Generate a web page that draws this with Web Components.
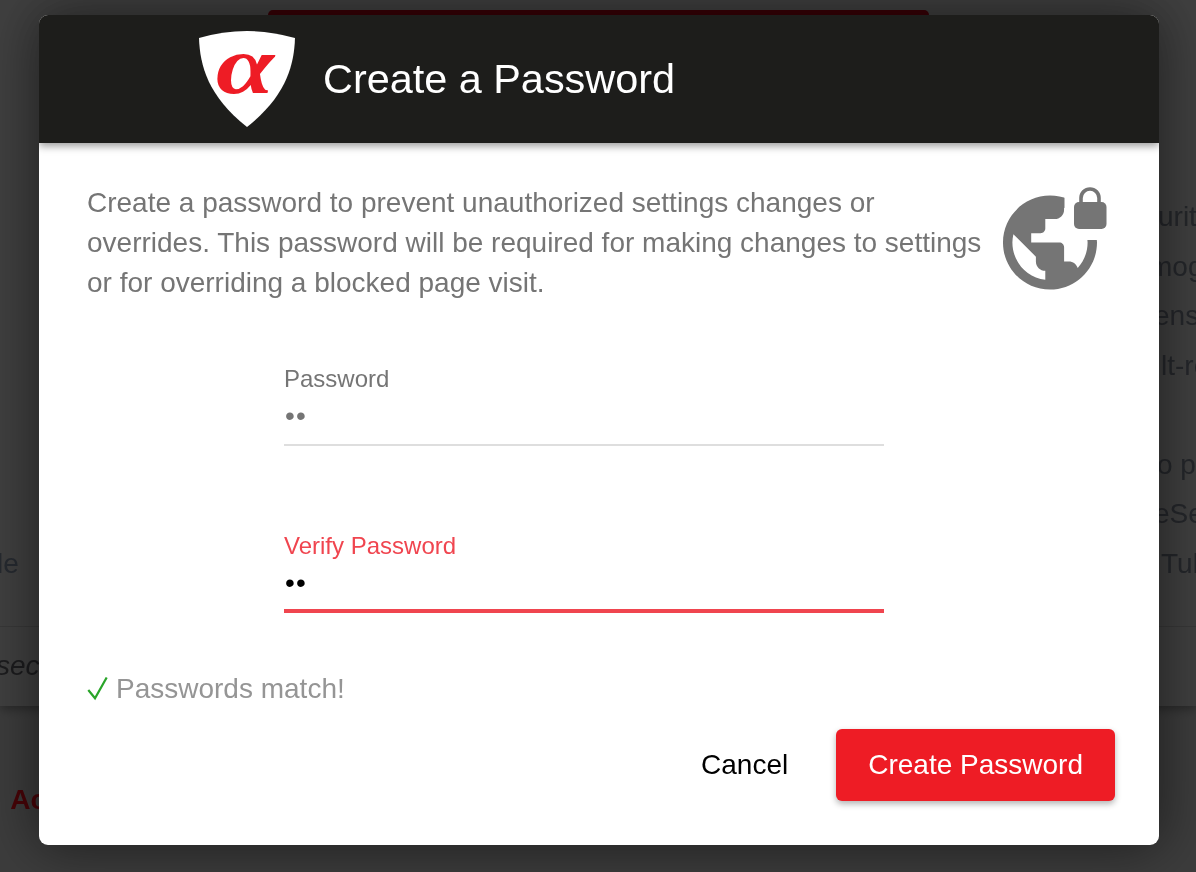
<!DOCTYPE html>
<html>
<head>
<meta charset="utf-8">
<style>
  html, body { margin: 0; height: 100%; background: #3c3c3c; overflow: hidden; }
  body { font-family: "Liberation Sans", Arial, sans-serif; }
</style>
</head>
<body>
<behind-page></behind-page>
<pw-dialog heading="Create a Password">
  <span slot="intro">Create a password to prevent unauthorized settings changes or overrides. This password will be required for making changes to settings or for overriding a blocked page visit.</span>
  <pw-field slot="fields" label="Password" value="••"></pw-field>
  <pw-field slot="fields" label="Verify Password" value="••" focused></pw-field>
  <span slot="status">Passwords match!</span>
  <pw-button slot="actions">Cancel</pw-button>
  <pw-button slot="actions" primary>Create Password</pw-button>
</pw-dialog>

<script>
class BehindPage extends HTMLElement {
  constructor() {
    super();
    const shadow = this.attachShadow({ mode: "open" });
    const rows = [
      [1144, "curity"], [1149, "mog"], [1154, "ens"], [1161, "lt-re"],
      [0, ""], [1157, "o p"], [1154, "eSe"], [1161, "Tub"],
    ];
    const rowsHtml = rows
      .map(([x, t], i) => `<div class="row" style="padding-left:${x}px">${
        i === 7 ? '<span class="left">le</span>' : ""}${t}</div>`)
      .join("");
    shadow.innerHTML = `
      <style>
        :host { display: block; position: fixed; inset: 0; overflow: hidden; }
        .card { height: 706px; background: #404040; box-shadow: 0 3px 10px rgba(0,0,0,.35); position: relative; display: flow-root; }
        .banner { width: 661px; height: 60px; margin: 10px 0 0 268px; background: #3a0006; border-radius: 5px; }
        .rows { margin-top: 122px; color: #25272b; font-size: 28px; }
        .row { height: 49.5px; line-height: 49.5px; white-space: nowrap; position: relative; }
        .left { position: absolute; left: -3px; color: #262a30; }
        .foot { position: absolute; top: 626px; left: 0; right: 0; height: 80px; box-sizing: border-box;
          border-top: 1px solid #383838; padding: 23px 0 0 0; color: #1c1c1e; font-style: italic; font-size: 28px; }
        .below { margin: 78px 0 0 -15px; font-size: 28px; font-weight: bold; color: #262a30; }
        .below b { color: #480508; margin-left: 2px; }
      </style>
      <div class="card">
        <div class="banner"></div>
        <div class="rows">${rowsHtml}</div>
        <div class="foot"><span style="margin-left:-4px">secu</span></div>
      </div>
      <div class="below">e <b>Ac</b></div>
    `;
  }
}

class PwDialog extends HTMLElement {
  constructor() {
    super();
    const shadow = this.attachShadow({ mode: "open" });
    shadow.innerHTML = `
      <style>
        :host { display: flex; position: fixed; inset: 0; justify-content: center; align-items: flex-start; padding: 15px 0 0 2px; box-sizing: border-box; }
        .dialog { width: 1120px; height: 830px; background: #fff; border-radius: 9px; overflow: hidden; display: flex; flex-direction: column;
          box-shadow: 0 0 50px rgba(0,0,0,.3); }
        .wrap { border-radius: 9px; box-shadow: 0 0 60px rgba(0,0,0,.28); }
        header { height: 128px; flex: none; background: #1d1d1b; display: flex; align-items: center; padding-left: 159px; gap: 27px;
          box-shadow: 0 3px 8px rgba(0,0,0,.4); position: relative; }
        header svg { display: block; }
        h1 { margin: 0; font-size: 41.4px; font-weight: 400; color: #fff; }
        .body { flex: 1; padding: 40px 44px 44px 48px; display: flex; flex-direction: column; }
        .top { display: flex; }
        .intro { width: 916px; padding-right: 16px; box-sizing: border-box; font-size: 28px; line-height: 40px; color: #757575; }
        .top svg { margin-top: 4px; flex: none; display: block; }
        .fields { margin: 62px 0 0 197px; width: 600px; display: flex; flex-direction: column; gap: 86px; }
        .status { margin-top: 56px; display: flex; align-items: center; gap: 8px; font-size: 28px; color: #959595; line-height: 40px; }
        .status svg { flex: none; display: block; }
        .actions { margin-top: auto; display: flex; justify-content: flex-end; align-items: center; gap: 48px; }
      </style>
      <div class="wrap"><div class="dialog">
        <header>
          <svg width="98" height="98" viewBox="0 0 98 98">
            <path d="M1 8 Q49 -6 97 8 C96 36 88 66 49 97 C10 66 2 36 1 8 Z" fill="#fff"/>
            <text transform="translate(18 63) scale(1.28 1)" font-family="Liberation Serif, serif" font-style="italic" font-weight="bold" font-size="82" fill="#ee1c25">α</text>
          </svg>
          <h1></h1>
        </header>
        <div class="body">
          <div class="top">
            <div class="intro"><slot name="intro"></slot></div>
            <svg width="104" height="104" viewBox="1003 187 104 104">
              <g transform="translate(993.6 186.2) scale(4.7)">
                <path fill="#757575" d="M12 2C6.48 2 2 6.48 2 12s4.48 10 10 10 10-4.48 10-10S17.52 2 12 2zm-1 17.93c-3.95-.49-7-3.85-7-7.93 0-.62.08-1.21.21-1.79L9 15v1c0 1.1.9 2 2 2v1.93zm6.9-2.54c-.26-.81-1-1.39-1.9-1.39h-1v-3c0-.55-.45-1-1-1H8v-2h2c.55 0 1-.45 1-1V7h2c1.1 0 2-.9 2-2v-.41c2.93 1.19 5 4.06 5 7.41 0 2.08-.8 3.97-2.1 5.39z"/>
              </g>
              <rect x="1064.5" y="187" width="43" height="53" fill="#fff"/>
              <rect x="1074" y="202" width="32.5" height="27" rx="5" fill="#757575"/>
              <path d="M1081 203 v-5 a9 9 0 0 1 18 0 v5" fill="none" stroke="#757575" stroke-width="3.6"/>
            </svg>
          </div>
          <div class="fields"><slot name="fields"></slot></div>
          <div class="status">
            <svg width="21" height="24" viewBox="0 0 21 24"><polyline points="1.3,13 8,21.3 19.7,.5" fill="none" stroke="#2aa52a" stroke-width="2.2"/></svg>
            <slot name="status"></slot>
          </div>
          <div class="actions"><slot name="actions"></slot></div>
        </div>
      </div></div>
    `;
    shadow.querySelector("h1").textContent = this.getAttribute("heading");
  }
}

class PwField extends HTMLElement {
  constructor() {
    super();
    const shadow = this.attachShadow({ mode: "open" });
    shadow.innerHTML = `
      <style>
        :host { display: block; --c: #757575; --v: #757575; --line: #dedede; --lh: 2px; --vh: 45px; }
        :host([focused]) { --c: #f0454f; --v: #000; --line: #f0454f; --lh: 4px; --vh: 43px; }
        .label { font-size: 24px; line-height: 28px; color: var(--c); }
        .value { height: var(--vh); margin-top: 6px; padding-left: 1px; line-height: 34px; font-size: 28px; letter-spacing: 1.2px; color: var(--v); border-bottom: var(--lh) solid var(--line); }
      </style>
      <div class="label"></div>
      <div class="value"></div>
    `;
    shadow.querySelector(".label").textContent = this.getAttribute("label");
    shadow.querySelector(".value").textContent = this.getAttribute("value");
  }
}

class PwButton extends HTMLElement {
  constructor() {
    super();
    const shadow = this.attachShadow({ mode: "open" });
    shadow.innerHTML = `
      <style>
        :host { display: block; font-size: 28px; color: #000; }
        :host([primary]) .b { background: #ee1c25; color: #fff; padding: 0 32px; border-radius: 6px; box-shadow: 0 3px 6px rgba(0,0,0,.3); }
        .b { height: 72px; line-height: 72px; }
      </style>
      <div class="b"><slot></slot></div>
    `;
  }
}

customElements.define("behind-page", BehindPage);
customElements.define("pw-dialog", PwDialog);
customElements.define("pw-field", PwField);
customElements.define("pw-button", PwButton);
</script>
</body>
</html>
